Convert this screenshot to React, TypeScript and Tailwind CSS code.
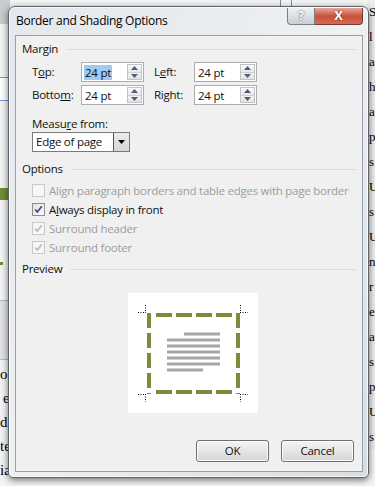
import React from "react";

function Up({ down }: { down?: boolean }) {
  return (
    <svg width="7" height="4" viewBox="0 0 7 4">
      <polygon points={down ? "0,0 7,0 3.5,4" : "0,4 7,4 3.5,0"} fill="#4e5d79" />
    </svg>
  );
}

function Spin({ value, selected }: { value: string; selected?: boolean }) {
  return (
    <div className="flex h-[20px] w-[63px] border border-[#abadb3] bg-white">
      <div className="flex flex-1 items-center pl-[2px]">
        <span className={selected ? "bg-[#9fcbf2] px-[1px] leading-[15px]" : "px-[1px] leading-[15px]"}>{value}</span>
      </div>
      <div className="my-[1px] mr-[1px] flex w-[15px] flex-col border border-[#c3c3c3]">
        <div className="flex flex-1 items-center justify-center border-b border-[#d0d0d0] bg-gradient-to-b from-[#fafafa] to-[#e8e8e8]">
          <Up />
        </div>
        <div className="flex flex-1 items-center justify-center bg-gradient-to-b from-[#f3f3f3] to-[#e2e2e2]">
          <Up down />
        </div>
      </div>
    </div>
  );
}

function Check({ checked, disabled }: { checked?: boolean; disabled?: boolean }) {
  return (
    <div
      className={
        disabled
          ? "flex h-[13px] w-[13px] shrink-0 items-center justify-center border border-[#c8c8c8] bg-[#f7f7f7]"
          : "flex h-[13px] w-[13px] shrink-0 items-center justify-center border border-[#8f8f8f] bg-gradient-to-br from-[#e0e0e0] to-[#fdfdfd]"
      }
    >
      {checked && (
        <svg width="9" height="9" viewBox="0 0 9 9">
          <path d="M1.2 4.6 L3.4 7 L7.8 1.3" fill="none" stroke={disabled ? "#b9b9b9" : "#3a4d80"} strokeWidth="1.7" />
        </svg>
      )}
    </div>
  );
}

function Section({ title }: { title: string }) {
  return (
    <div className="flex h-[16px] items-center pl-[6px] pr-[6px]">
      <span>{title}</span>
      <div className="ml-[8px] h-px flex-1 bg-[#dcdcdc]" />
    </div>
  );
}

function Option({ label, checked, disabled, mn }: { label: string; checked?: boolean; disabled?: boolean; mn?: number }) {
  return (
    <div className={disabled ? "flex h-[19px] items-center gap-[4px] whitespace-nowrap pl-[16px] text-[#9d9d9d]" : "flex h-[19px] items-center gap-[4px] whitespace-nowrap pl-[16px]"}>
      <Check checked={checked} disabled={disabled} />
      <span>
        {mn === undefined ? (
          label
        ) : (
          <>
            {label.slice(0, mn)}
            <u>{label[mn]}</u>
            {label.slice(mn + 1)}
          </>
        )}
      </span>
    </div>
  );
}

function Preview() {
  const lines = [41, 47, 53, 59, 65, 71, 77];
  return (
    <svg width="130" height="120" viewBox="0 0 130 120" className="bg-white">
      {lines.map((y, i) => (
        <rect key={y} x={i === 0 ? 56 : 39} y={y - 1.5} width={i === 0 ? 36 : i === 6 ? 36 : 53} height="3" fill="#a6a6a6" />
      ))}
      <g stroke="#7a8d3c" strokeWidth="4" fill="none">
        <line x1="28" y1="22" x2="104" y2="22" strokeDasharray="16 4" />
        <line x1="28" y1="99" x2="104" y2="99" strokeDasharray="16 4" />
        <line x1="21" y1="20" x2="21" y2="101" strokeDasharray="15 5" />
        <line x1="110" y1="20" x2="110" y2="101" strokeDasharray="15 5" />
      </g>
      <g stroke="#000" strokeWidth="1" strokeDasharray="1 1.5">
        <line x1="10" y1="19.5" x2="18" y2="19.5" />
        <line x1="17.5" y1="12" x2="17.5" y2="20" />
        <line x1="112" y1="19.5" x2="120" y2="19.5" />
        <line x1="112.5" y1="12" x2="112.5" y2="20" />
        <line x1="10" y1="101.5" x2="18" y2="101.5" />
        <line x1="17.5" y1="101" x2="17.5" y2="109" />
        <line x1="112" y1="101.5" x2="120" y2="101.5" />
        <line x1="112.5" y1="101" x2="112.5" y2="109" />
      </g>
    </svg>
  );
}

function Button({ label }: { label: string }) {
  return (
    <div className="flex h-[22px] w-[73px] items-center justify-center rounded-[3px] border border-[#707070] bg-gradient-to-b from-[#f4f4f4] via-[#e6e6e6] to-[#d4d4d4] shadow-[inset_0_0_0_1px_#fcfcfc]">
      {label}
    </div>
  );
}

export default function App() {
  const rightChars = ["S", "l", "a", "h", "a", "p", "s", "U", "s", "U", "n", "r", "e", "a", "s", "p", "U", "s"];
  return (
    <div className="relative h-[486px] w-[375px] overflow-hidden bg-[#f4f4f4] font-['Open_Sans',sans-serif] text-[11.5px] tracking-[-0.25px] text-[#111]">
      {/* document behind the dialog */}
      <div className="absolute left-0 top-0 h-[24px] w-[10px] bg-[#c9cbcd]" />
      <div className="absolute left-0 top-[77px] h-[24px] w-[9px] border border-l-0 border-[#6f9ad6] bg-white" />
      <div className="absolute left-0 top-[188px] h-[12px] w-[9px] bg-[#6f8d34]" />
      <div className="absolute left-0 top-[262px] h-[3px] w-[3px] bg-[#6f8d34]" />
      <div className="absolute left-0 top-[300px] h-[60px] w-[10px] border-y border-[#b8b8b8] bg-[#e2e2e2]" />
      <div className="absolute left-0 top-[362px] flex w-[12px] flex-col font-['Liberation_Serif',serif] text-[15px] leading-[24px] tracking-normal text-black">
        <span>o</span>
        <span className="pl-[3px]">e</span>
        <span>da</span>
        <span>te</span>
        <span>ia</span>
      </div>
      <div className="absolute left-[367px] top-0 flex w-[8px] flex-col bg-[#ececec] pl-[2px] font-['Liberation_Serif',serif] text-[13px] leading-[16px] tracking-normal text-black">
        {rightChars.map((c, i) => (
          <span key={i} className="h-[25px] pt-[4px]">
            {c}
          </span>
        ))}
      </div>
      <div className="absolute left-[280px] top-0 h-[6px] w-[12px] border-x border-[#8a8a8a]" />

      {/* dialog */}
      <div className="pl-[8px] pt-[6px]">
        <div className="relative h-[472px] w-[361px] rounded-t-[7px] rounded-b-[5px] border border-[#5e6468] bg-gradient-to-br from-[#e4e8ec] via-[#eef0f2] to-[#d9dde1] pb-[5px] pl-[6px] pr-[5px] shadow-[0_2px_7px_rgba(0,0,0,0.55),inset_0_0_0_1px_rgba(255,255,255,0.8)]">
          <div className="flex h-[28px] items-center pl-[1px] text-[12px] tracking-[-0.28px] text-black">Border and Shading Options</div>

          <div className="absolute left-[278px] top-[1px] flex h-[17px] tracking-normal">
            <div className="flex w-[28px] items-center justify-center rounded-bl-[4px] border border-t-0 border-[#7a7f86] bg-gradient-to-b from-[#eef0f3] to-[#c9ced4] text-[12px] font-bold text-white [text-shadow:0_0_2px_#333]">
              ?
            </div>
            <div className="flex w-[48px] items-center justify-center rounded-br-[4px] border border-l-0 border-t-0 border-[#7a3a30] bg-gradient-to-b from-[#e6a89c] via-[#c9503d] to-[#d46a55] text-[13px] font-bold text-white [text-shadow:0_0_2px_#431]">
              X
            </div>
          </div>

          <div className="flex h-[437px] w-[348px] flex-col border border-[#98a0a8] bg-[#f0f0f0]">
            <div className="mt-[5px]">
              <Section title="Margin" />
            </div>

            <div className="mt-[5px] flex h-[20px] items-center">
              <span className="w-[50px] pl-[16px]">
                T<u>o</u>p:
              </span>
              <div className="ml-[15px]">
                <Spin value="24 pt" selected />
              </div>
              <span className="ml-[10px] w-[40px]">
                L<u>e</u>ft:
              </span>
              <Spin value="24 pt" />
            </div>
            <div className="mt-[3px] flex h-[20px] items-center">
              <span className="w-[50px] pl-[16px]">
                Botto<u>m</u>:
              </span>
              <div className="ml-[15px]">
                <Spin value="24 pt" />
              </div>
              <span className="ml-[10px] w-[40px]">
                Ri<u>g</u>ht:
              </span>
              <Spin value="24 pt" />
            </div>

            <div className="mt-[11px] flex h-[16px] items-center pl-[16px]">
              Measu<u>r</u>e from:
            </div>
            <div className="ml-[16px] mt-0 flex h-[20px] w-[98px] border border-[#7a7a7a] bg-white">
              <div className="flex flex-1 items-center pl-[3px]">Edge of page</div>
              <div className="flex w-[16px] items-center justify-center border-l border-[#555] bg-gradient-to-b from-[#ececec] to-[#d6d6d6]">
                <svg width="7" height="4" viewBox="0 0 7 4">
                  <polygon points="0,0 7,0 3.5,4" fill="#000" />
                </svg>
              </div>
            </div>

            <div className="mt-[9px]">
              <Section title="Options" />
            </div>
            <div className="mt-[4px] flex flex-col">
              <Option label="Align paragraph borders and table edges with page border" disabled />
              <Option label="Always display in front" checked mn={1} />
              <Option label="Surround header" checked disabled />
              <Option label="Surround footer" checked disabled />
            </div>

            <div className="mt-[4px]">
              <Section title="Preview" />
            </div>
            <div className="ml-[112px] mt-[16px] h-[120px] w-[130px]">
              <Preview />
            </div>

            <div className="mr-[8px] mt-[27px] flex justify-end gap-[12px]">
              <Button label="OK" />
              <Button label="Cancel" />
            </div>
          </div>
        </div>
      </div>
    </div>
  );
}
